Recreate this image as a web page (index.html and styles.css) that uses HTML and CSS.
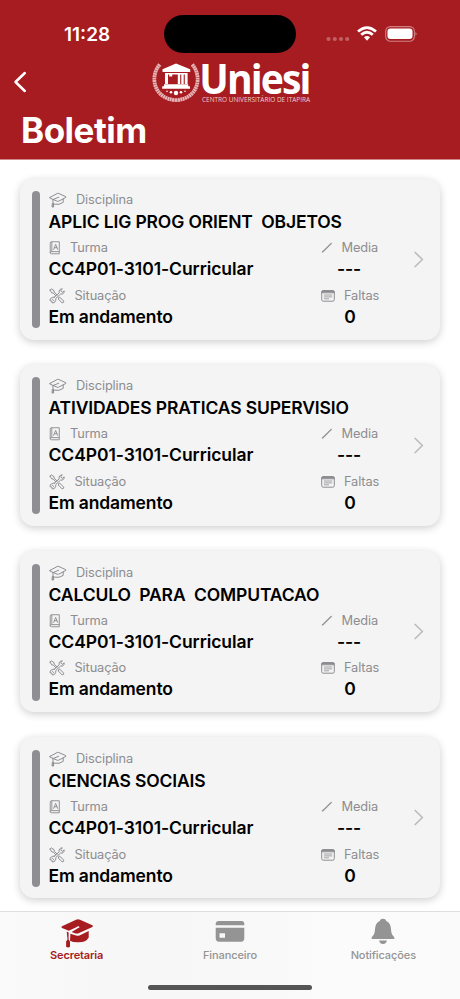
FILE: index.html
```html
<!DOCTYPE html>
<html lang="pt-BR">
<head>
<meta charset="utf-8">
<title>Boletim</title>
<link rel="stylesheet" href="styles.css">
</head>
<body>
<svg class="defs" aria-hidden="true">
  <symbol id="cap" viewBox="0 0 18 16"><path d="M1 5.4 8.2 1.5Q9 1.1 9.8 1.5L16.8 4.7Q17.3 5.1 16.8 5.5L9.6 9.2Q9 9.5 8.2 9.2L1.2 6.2Q.7 5.8 1 5.4ZM4 7.6V14.5M4 7.6 9.7 5.2M5.2 12.2Q10.5 13.3 14.2 10.4V7M3.3 11.5 3 15H4.6L4.5 11.5"/></symbol>
  <symbol id="book" viewBox="0 0 12 15"><path d="M.9 12.5V2.3Q.9.8 2.4.8H10.6V11.4H2.2Q.9 11.6.9 12.6 1 13.7 2.2 13.7H10.6V11.4M2.6 1V11.3M4.6 9 6.7 3.6 8.8 9M5.3 7.2H8"/></symbol>
  <symbol id="tools" viewBox="0 0 16 16"><path d="M1 2.1 2.3.9 5 2.6 5.2 4.1 8.1 7M9.5 10 10.7 9.2 14.8 13.1Q15 14.8 13.1 14.9L9.4 11.1 9.7 10M1 2.1 2.8 4.9 4.3 5.1 6.8 7.8M5.5 9.1 10.2 4.8Q9.4 1.2 13.3.8L11.7 2.8 13.2 4.4 15.2 2.9Q15.2 6.6 11.5 6.1L6.8 10.5Q7.2 14.7 3.2 15L2.9 13.1 1 12.7Q.9 9.1 5.5 9.1ZM3.4 11.2 4.9 12.7"/></symbol>
  <symbol id="pencil" viewBox="0 0 12 12"><path d="M.8 11 1.4 9.2 9.8.9Q10.8.5 11 1.4L2.5 10.1Z" fill="currentColor" stroke="none"/></symbol>
  <symbol id="note" viewBox="0 0 14 12"><path d="M2.2.7H11.8Q13.3.7 13.3 2.2V9.6Q13.3 11.2 11.8 11.2H2.2Q.7 11.2.7 9.6V2.2Q.7.7 2.2.7Z"/><path d="M3.3 5H10.8M3.3 6.9H10.8M3.3 8.8H7.6" stroke-width=".8"/><path d="M.7 2.4V2Q.7.7 2.2.7H11.8Q13.3.7 13.3 2V2.4Z" fill="currentColor"/></symbol>
</svg>

<header class="header">
  <div class="status">
    <span class="time">11:28</span>
    <span class="island"></span>
    <svg class="signals" width="90" height="20" viewBox="0 0 90 20">
      <g fill="#fff" fill-opacity=".3"><circle cx="2.5" cy="15" r="2.1"/><circle cx="8.8" cy="15" r="2.1"/><circle cx="15" cy="15" r="2.1"/><circle cx="21.2" cy="15" r="2.1"/></g>
      <g fill="none" stroke="#fff" stroke-width="2.8"><path d="M32 7.5Q41 -.3 50 7.5"/><path d="M35.2 10.8Q41 5.7 46.8 10.8"/></g>
      <path fill="#fff" d="M38 13.2Q41 10.7 44 13.2L41 16.7Z"/>
      <rect x="59.7" y="2.6" width="28.7" height="14.6" rx="4.7" fill="none" stroke="#fff" stroke-opacity=".45" stroke-width="1.1"/>
      <rect x="61.5" y="4.6" width="25" height="10.5" rx="3" fill="#fff"/>
      <path d="M89.5 8Q91.8 9.8 89.5 11.8Z" fill="#fff" fill-opacity=".5"/>
    </svg>
  </div>
  <div class="navbar">
    <svg class="back" width="14" height="22" viewBox="0 0 14 22"><path d="M11.8 2 2.5 11 11.8 20" fill="none" stroke="#fff" stroke-width="2.5" stroke-linecap="round" stroke-linejoin="round"/></svg>
    <svg class="logo" width="160" height="44" viewBox="0 0 160 44">
      <g fill="none" stroke="#e6b4b6" stroke-width="3.8" stroke-dasharray="2 .4"><path d="M7.8 4.5C-2.5 16 1.2 38.8 24 40.2"/><path d="M40.2 4.5C50.5 16 46.8 38.8 24 40.2"/></g>
      <path fill="#fff" d="M10.5 9.2 24 3.4 38.2 9.2V12H10.5ZM13 13H35.5V14.5H13ZM13 14.5H16V24H13ZM17.2 14.5H20.2V16.5H17.2ZM25.8 13H28.2V24H25.8ZM29.3 13H31.7V24H29.3ZM32.8 13H35.6V24H32.8ZM12 24.3H36.2V26.2H12ZM10.2 26.2H38V28.8H10.2Z"/>
      <g fill="#fff"><circle cx="24" cy="33" r="2.2"/><circle cx="19" cy="32.2" r="1.3"/><circle cx="29" cy="32.2" r="1.3"/><circle cx="15" cy="31.2" r=".8"/><circle cx="33" cy="31.2" r=".8"/></g>
      <text class="brand" x="47.2" y="33.8" textLength="110.5" lengthAdjust="spacingAndGlyphs">Uniesi</text>
      <text class="tagline" x="50" y="41.8" textLength="108" lengthAdjust="spacingAndGlyphs">CENTRO UNIVERSITÁRIO DE ITAPIRA</text>
    </svg>
  </div>
  <h1>Boletim</h1>
</header>

<main class="list" id="list">
  <template id="card">
    <article class="card">
      <span class="bar"></span>
      <div class="info">
        <div class="label"><svg class="ico" width="18" height="16"><use href="#cap"/></svg><span class="l-disc">Disciplina</span></div>
        <div class="value name"></div>
        <div class="row">
          <div>
            <div class="label"><svg class="ico" width="12" height="14"><use href="#book"/></svg><span class="l-turma">Turma</span></div>
            <div class="value turma">CC4P01-3101-Curricular</div>
          </div>
          <div class="side">
            <div class="label"><svg class="ico" width="12" height="12"><use href="#pencil"/></svg><span class="l-media">Media</span></div>
            <div class="value dashes">---</div>
          </div>
        </div>
        <div class="row last">
          <div>
            <div class="label"><svg class="ico" width="16" height="16"><use href="#tools"/></svg><span class="l-sit">Situação</span></div>
            <div class="value">Em andamento</div>
          </div>
          <div class="side">
            <div class="label"><svg class="ico" width="14" height="12"><use href="#note"/></svg><span class="l-faltas">Faltas</span></div>
            <div class="value zero">0</div>
          </div>
        </div>
      </div>
      <svg class="chev" width="10" height="17" viewBox="0 0 10 17"><path d="M1.2 1.5 8.4 8.5 1.2 15.5" fill="none" stroke="#bcbcbe" stroke-width="1.7" stroke-linecap="round" stroke-linejoin="round"/></svg>
    </article>
  </template>
</main>

<nav class="tabs">
  <div class="tabrow">
    <div class="tab active">
      <svg width="34" height="30" viewBox="0 0 34 30"><path fill="#a61c20" d="M2 8.2 16 1.7Q18 1 20 1.7L32.4 7.2Q33.4 8.2 32.4 9L18 15.4Q17 15.8 15.5 15.4L11.7 14 17.8 10.2Q19 9.8 19.5 9.5L19 8.2Q17.5 8 16.3 9.2L8.8 12.8 2 10Q.6 9 2 8.2ZM10.4 15.7 16 17.6Q17.5 18 19.5 17.4L28.7 13V19.5Q26 24.8 17 24.3 12.8 24.3 10 22.7ZM6.7 13.6 8.6 14.4V21.5L10 23.5V28.8Q8.2 30 6.1 28.8V23.5L7.5 21.5Z"/></svg>
      <span>Secretaria</span>
    </div>
    <div class="tab">
      <svg width="34" height="30" viewBox="0 0 34 30"><path fill="#949494" fill-rule="evenodd" d="M6 3H28.5Q31.3 3 31.3 6V7.3H2.7V6Q2.7 3 6 3ZM2.7 9.7H31.3V20Q31.3 23.7 28.2 23.7H6Q2.7 23.7 2.7 20ZM6.5 15.2V19.7H12V15.2Z"/></svg>
      <span>Financeiro</span>
    </div>
    <div class="tab">
      <svg width="34" height="30" viewBox="0 0 34 30"><path fill="#949494" d="M17 .8Q19.7 .8 20.3 3 24.7 5 25 11 25 16 27.5 18.2 29.5 20.6 27.5 21H6.5Q4.5 20.6 6.5 18.2 9 16 9 11 9.3 5 13.7 3 14.3.8 17 .8ZM13 22.5H21Q20 26 17 26 14 26 13 22.5Z"/></svg>
      <span>Notificações</span>
    </div>
  </div>
  <div class="home"></div>
</nav>
<script src="app.js"></script>
</body>
</html>
```
FILE: styles.css
```css
* { box-sizing: border-box; }
body { margin: 0; width: 460px; height: 999px; overflow: hidden; display: flex; flex-direction: column; background: #fff; font-family: Inter, "Liberation Sans", sans-serif; }
.defs { position: absolute; width: 0; height: 0; }
.header { flex: none; height: 160px; background: #a61c20; color: #fff; border-bottom: 1px solid #cf8789; }
.status { height: 60px; display: grid; grid-template-columns: 164px 132px 1fr; padding-top: 15px; }
.time { padding: 8px 0 0 64px; font-size: 19px; line-height: 23px; font-weight: 600; letter-spacing: 0; }
.island { width: 132px; height: 38px; border-radius: 19px; background: #000; }
.signals { margin: 9px 0 0 30px; overflow: visible; }
.navbar { height: 46px; display: flex; padding-left: 13px; }
.back { margin-top: 11px; }
.logo { margin-left: 125px; overflow: visible; }
.brand { font: 700 42px/1 "Open Sans", sans-serif; letter-spacing: -2px; fill: #fff; }
.tagline { font: 400 6.5px/1 "Open Sans", sans-serif; fill: #efcccd; }
h1 { margin: 0; padding-left: 21px; font-size: 35px; line-height: 48px; font-weight: 700; letter-spacing: -.5px; }
.list { flex: 1; min-height: 0; overflow: hidden; padding: 18.5px 20px 0; display: flex; flex-direction: column; gap: 25.3px; }
.card { flex: none; height: 161px; border-radius: 14px; background: #f4f4f4; box-shadow: 0 2px 8px rgba(0,0,0,.2); display: flex; padding: 11px 16px 0 11.5px; }
.bar { width: 8.5px; height: 137px; margin-top: 1.5px; border-radius: 4.5px; background: #8f8e93; }
.info { flex: 1; padding: .5px 0 0 8.5px; }
.label { height: 20px; display: flex; align-items: center; font-size: 12.8px; letter-spacing: -.12px; color: #8d8d91; }
.label span { line-height: 18px; }
.ico { fill: none; stroke: currentColor; stroke-width: 1; stroke-linejoin: round; stroke-linecap: round; }
.value { height: 23px; font-size: 17.5px; line-height: 22px; font-weight: 600; letter-spacing: -.06px; color: #000; white-space: pre; }
.name { line-height: 24px; height: 28px; letter-spacing: -.14px; }
.row { display: grid; grid-template-columns: 272.5px 1fr; height: 47.9px; }
.last .value { letter-spacing: -.14px; }
.side .value { width: 56px; text-align: center; }
.side .zero { width: 58px; }
.l-disc { margin-left: 9.5px; }
.l-turma { margin-left: 9.5px; }
.l-media { margin-left: 8.5px; }
.l-sit { margin-left: 10px; }
.l-faltas { margin-left: 9px; }
.chev { margin-top: 61px; }
.tabs { flex: none; height: 88px; background: linear-gradient(90deg, #fafafa, #f7f7f7 25%, #f8f8f8 50%, #fbfbfb 75%, #fafafa); border-top: 1px solid #dedede; }
.tabrow { display: grid; grid-template-columns: repeat(3, 1fr); height: 73px; }
.tab { display: flex; flex-direction: column; align-items: center; padding-top: 6px; font-size: 11px; line-height: 14.5px; font-weight: 500; letter-spacing: -.1px; color: #949494; }
.active { color: #a61c20; font-weight: 600; letter-spacing: -.15px; }
.home { width: 164px; height: 5px; margin: 0 auto; border-radius: 3px; background: #555; }
```
FILE: app.js
```js
const list = document.getElementById('list');
const card = document.getElementById('card');
['APLIC LIG PROG ORIENT  OBJETOS', 'ATIVIDADES PRATICAS SUPERVISIO', 'CALCULO  PARA  COMPUTACAO', 'CIENCIAS SOCIAIS'].forEach(name => {
  const node = card.content.cloneNode(true);
  node.querySelector('.name').textContent = name;
  list.appendChild(node);
});
```
